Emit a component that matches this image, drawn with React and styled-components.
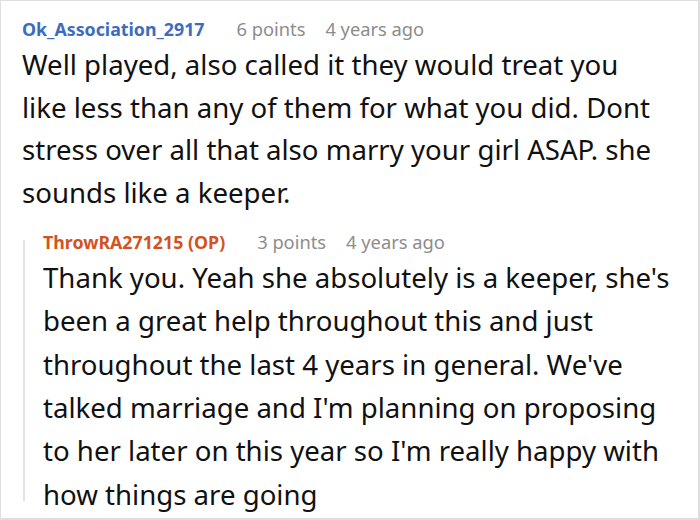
import React from "react";
import styled, { createGlobalStyle } from "styled-components";

const GlobalStyle = createGlobalStyle`
  html, body {
    margin: 0;
    padding: 0;
    background: #ffffff;
  }
  body {
    font-family: "Noto Sans", "Open Sans", "DejaVu Sans", sans-serif;
  }
`;

const comment = {
  author: "Ok_Association_2917",
  points: "6 points",
  time: "4 years ago",
  body: "Well played, also called it they would treat you like less than any of them for what you did. Dont stress over all that also marry your girl ASAP. she sounds like a keeper.",
  reply: {
    author: "ThrowRA271215 (OP)",
    points: "3 points",
    time: "4 years ago",
    body: "Thank you. Yeah she absolutely is a keeper, she's been a great help throughout this and just throughout the last 4 years in general. We've talked marriage and I'm planning on proposing to her later on this year so I'm really happy with how things are going",
  },
};

export default function App() {
  const { reply } = comment;
  return (
    <>
      <GlobalStyle />
      <Frame>
        <Comment>
          <Meta>
            <Author $op={false}>{comment.author}</Author>
            <Info>{comment.points}</Info>
            <Info>{comment.time}</Info>
          </Meta>
          <Body>{comment.body}</Body>
        </Comment>
        <Reply>
          <Meta>
            <Author $op>{reply.author}</Author>
            <Info>{reply.points}</Info>
            <Info>{reply.time}</Info>
          </Meta>
          <Body $tight>{reply.body}</Body>
        </Reply>
      </Frame>
    </>
  );
}

const Frame = styled.div`
  width: 700px;
  height: 520px;
  box-sizing: border-box;
  border: 1px solid #dedede;
  border-bottom-width: 2px;
  border-right-width: 2px;
  padding: 14px 12px 0 21px;
  overflow: hidden;
`;

const Comment = styled.div`
  display: flex;
  flex-direction: column;
  padding-right: 28px;
`;

const Meta = styled.div`
  display: flex;
  align-items: baseline;
  gap: 20px;
  font-size: 18.3px;
  line-height: 28px;
  white-space: nowrap;
`;

const Author = styled.span`
  font-size: 17.8px;
  font-weight: 700;
  color: ${(p) => (p.$op ? "#d4521f" : "#3d6cbf")};
  margin-right: 12px;
`;

const Info = styled.span`
  color: #8c8c8c;
`;

const Body = styled.div`
  font-size: 27.6px;
  line-height: ${(p) => (p.$tight ? "43.4px" : "42.7px")};
  color: #111;
`;

const Reply = styled.div`
  position: relative;
  margin-top: 14px;
  padding-left: 21px;

  &::before {
    content: "";
    position: absolute;
    left: 1px;
    top: 12px;
    bottom: 15px;
    width: 2px;
    background: #e2e2e2;
  }
`;
